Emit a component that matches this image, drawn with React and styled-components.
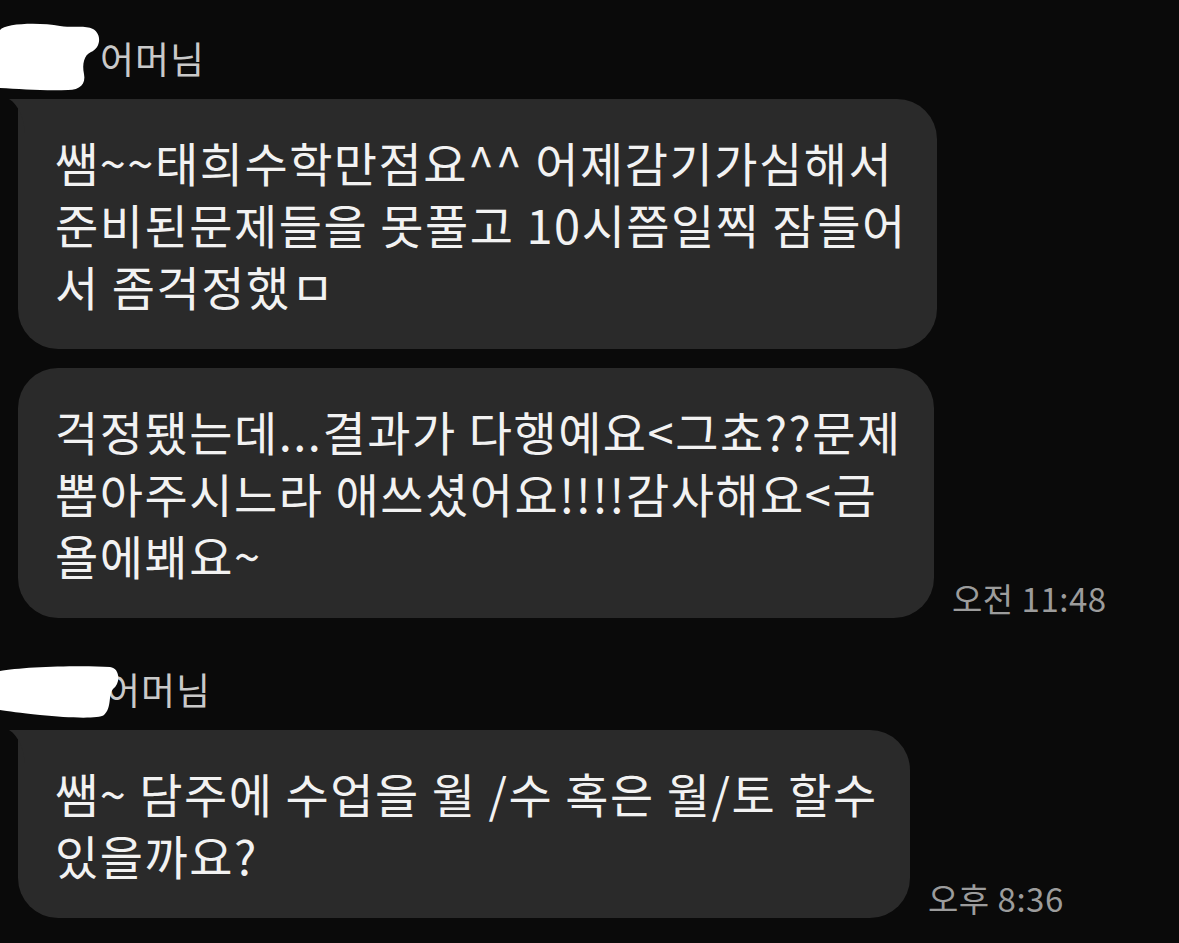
import React from 'react';
import styled, {createGlobalStyle} from 'styled-components';

const GlobalStyle = createGlobalStyle`
    html, body {
        margin: 0;
        padding: 0;
        background: #0a0a0a;
    }
    body {
        font-family: "Noto Sans CJK KR", "Noto Sans", sans-serif;
        width: 1179px;
        height: 943px;
        overflow: hidden;
    }
`

const Page = styled.div`
    display: flex;
    flex-direction: column;
    padding: 38px 0 0 18px;
    box-sizing: border-box;
    height: 943px;
    background: #0a0a0a;
`

const Group = styled.div`
    display: flex;
    flex-direction: column;
    gap: 19px;
    margin-bottom: 51px;
`

const NameRow = styled.div`
    position: relative;
    margin-left: -18px;
    margin-bottom: 2px;
    padding-left: ${props => props.indent}px;
    font-size: 37px;
    line-height: 40px;
    letter-spacing: 1px;
    color: #c9c9c9;
`

const Blob = styled.svg`
    position: absolute;
    left: 0;
    top: ${props => props.top}px;
`

const Row = styled.div`
    display: flex;
    align-items: flex-end;
    gap: 18px;
`

const Bubble = styled.div`
    position: relative;
    box-sizing: border-box;
    width: ${props => props.width}px;
    padding: 32px 20px 32px 37px;
    background: #2a2a2a;
    border-radius: 40px;
    border-top-left-radius: ${props => props.tail ? '6px' : '40px'};
    color: #f2f2f2;
    font-size: 47px;
    line-height: 62px;
    letter-spacing: 1.5px;
    white-space: nowrap;
`

const Tail = styled.svg`
    position: absolute;
    left: -9px;
    top: 0;
`

const Time = styled.span`
    font-size: 33px;
    line-height: 36px;
    letter-spacing: 0.5px;
    color: #9c9c9c;
    white-space: nowrap;
    margin-bottom: 2px;
`

const BubbleTail = () => (
    <Tail width="16" height="34" viewBox="0 0 16 34">
        <path d="M0 0 L16 0 L16 34 C 15 20, 10 6, 0 0 Z" fill="#2a2a2a"/>
    </Tail>
);

const Message = ({width, tail, lines, time}) => (
    <Row>
        <Bubble width={width} tail={tail}>
            {tail && <BubbleTail/>}
            {lines.map((line, i) => <div key={i}>{line}</div>)}
        </Bubble>
        {time && <Time>{time}</Time>}
    </Row>
);

const App = () => {
    return (
        <Page>
            <GlobalStyle/>
            <Group>
                <NameRow indent={100}>
                    어머님
                    <Blob top={-16} width="102" height="75" viewBox="0 0 102 75">
                        <path d="M0 8 C 5 1, 40 0, 60 4 C 75 6, 85 3, 93 7 C 102 12, 101 26, 91 30 C 84 33, 82 42, 84 52 C 86 62, 80 68, 68 68 C 45 69, 20 67, 0 66 Z" fill="#ffffff"/>
                    </Blob>
                </NameRow>
                <Message
                    width={919}
                    tail
                    lines={[
                        '쌤~~태희수학만점요^^ 어제감기가심해서',
                        '준비된문제들을 못풀고 10시쯤일찍 잠들어',
                        '서 좀걱정했ㅁ'
                    ]}
                />
                <Message
                    width={916}
                    lines={[
                        '걱정됐는데...결과가 다행예요<그쵸??문제',
                        '뽑아주시느라 애쓰셨어요!!!!감사해요<금',
                        '욜에봬요~'
                    ]}
                    time="오전 11:48"
                />
            </Group>
            <Group>
                <NameRow indent={106}>
                    어머님
                    <Blob top={-6} width="120" height="60" viewBox="0 0 120 60">
                        <path d="M0 8 C 20 4, 80 2, 110 4 C 120 5, 121 20, 113 26 C 108 32, 112 45, 104 52 C 98 56, 70 55, 40 52 C 20 50, 8 48, 0 47 Z" fill="#ffffff"/>
                    </Blob>
                </NameRow>
                <Message
                    width={892}
                    tail
                    lines={[
                        '쌤~ 담주에 수업을 월 /수 혹은 월/토 할수',
                        '있을까요?'
                    ]}
                    time="오후 8:36"
                />
            </Group>
        </Page>
    );
};

export default App;
